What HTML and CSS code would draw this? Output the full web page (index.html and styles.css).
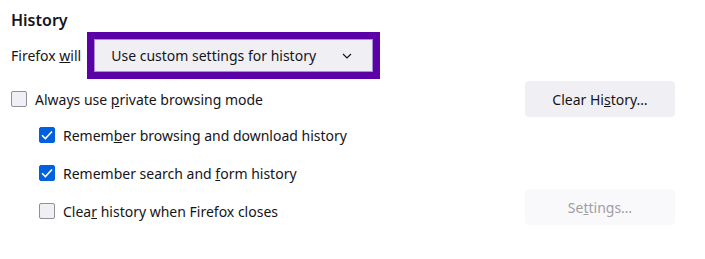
FILE: index.html
```html
<!DOCTYPE html>
<html lang="en">

<head>
    <meta charset="UTF-8">
    <meta name="viewport" content="width=device-width, initial-scale=1.0">
    <title>History</title>
    <link rel="stylesheet" href="styles.css">
</head>

<body>
    <div class="wrap">
        <h1 class="title">History</h1>

        <div class="mode-row">
            <span class="mode-label">Firefox <u>w</u>ill</span>
            <div class="focus-ring">
                <button class="dropdown">
                    <span>Use custom settings for history</span>
                    <svg class="chevron" width="10" height="6" viewBox="0 0 10 6">
                        <path d="M1 1l4 4 4-4" fill="none" stroke="#15141a" stroke-width="1.2" />
                    </svg>
                </button>
            </div>
        </div>

        <div class="row row-private">
            <label class="check">
                <span class="box"></span>
                <span>Always use <u>p</u>rivate browsing mode</span>
            </label>
            <button class="btn">Clear Hi<u>s</u>tory…</button>
        </div>

        <div class="sub-list">
            <div class="row row-sub">
                <label class="check">
                    <span class="box checked">
                        <svg width="12" height="10" viewBox="0 0 12 10">
                            <path d="M1 5.2l3.4 3.3L11 1.5" fill="none" stroke="#fff" stroke-width="1.6" />
                        </svg>
                    </span>
                    <span>Remem<u>b</u>er browsing and download history</span>
                </label>
            </div>

            <div class="row row-sub">
                <label class="check">
                    <span class="box checked">
                        <svg width="12" height="10" viewBox="0 0 12 10">
                            <path d="M1 5.2l3.4 3.3L11 1.5" fill="none" stroke="#fff" stroke-width="1.6" />
                        </svg>
                    </span>
                    <span>Remember search and <u>f</u>orm history</span>
                </label>
            </div>

            <div class="row row-sub">
                <label class="check">
                    <span class="box"></span>
                    <span>Clea<u>r</u> history when Firefox closes</span>
                </label>
                <button class="btn btn-raised" disabled>Se<u>t</u>tings…</button>
            </div>
        </div>
    </div>
</body>

</html>
```

FILE: styles.css
```css
* {
    padding: 0;
    margin: 0;
    box-sizing: border-box;
}

body {
    background: #fff;
    color: #15141a;
    font: 14px "Noto Sans", "Open Sans", sans-serif;
}

.wrap {
    width: 675px;
    padding: 8px 0 0 11px;
}

.title {
    font-size: 16px;
    font-weight: 600;
    line-height: 24px;
}

.mode-row {
    display: flex;
    align-items: center;
    height: 47px;
}

.mode-label {
    margin-right: 6px;
}

.focus-ring {
    border: 7px solid #5a01a7;
}

.dropdown {
    display: flex;
    align-items: center;
    justify-content: space-between;
    width: 279px;
    height: 33px;
    padding: 0 20px 0 16px;
    background: #f0f0f4;
    border: 1px solid #a98fd0;
    color: #15141a;
    font: 14px "Noto Sans", "Open Sans", sans-serif;
}

.row {
    display: flex;
    align-items: center;
    justify-content: space-between;
}

.row-private {
    height: 36px;
    margin-top: 2px;
}

.sub-list {
    margin-top: -1px;
}

.row-sub {
    height: 38px;
    padding-left: 28px;
}

.check {
    display: flex;
    align-items: center;
    gap: 8px;
}

.box {
    display: flex;
    align-items: center;
    justify-content: center;
    width: 16px;
    height: 16px;
    border: 1px solid #8f8f9d;
    border-radius: 2px;
    background: #f0f0f4;
}

.box.checked {
    background: #0061e0;
    border-color: #0061e0;
}

.btn {
    width: 150px;
    height: 36px;
    border: 0;
    border-radius: 4px;
    background: #f0f0f4;
    color: #15141a;
    font: 14px "Noto Sans", "Open Sans", sans-serif;
}

.btn-raised {
    margin-bottom: 8px;
}

.btn:disabled {
    background: #f9f9fb;
    color: #9e9ea5;
}
```
